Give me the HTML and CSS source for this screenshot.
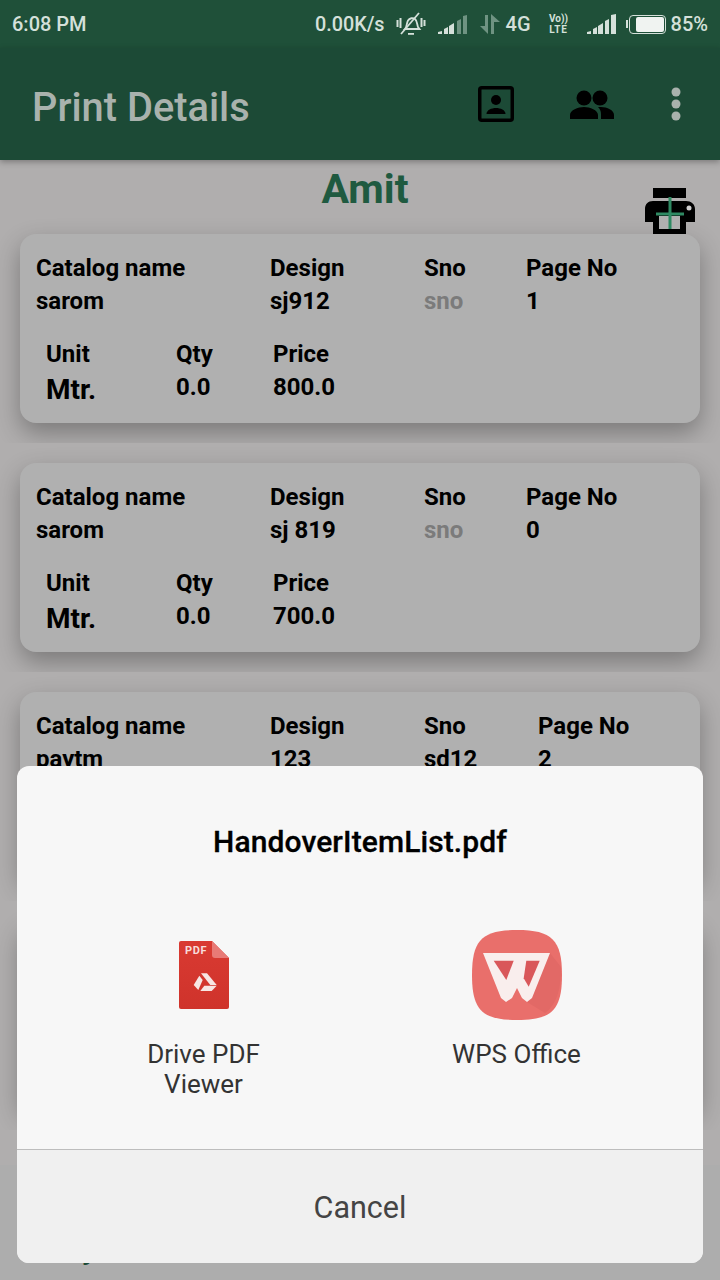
FILE: index.html
```html
<!DOCTYPE html>
<html lang="en">
<head>
<meta charset="utf-8">
<title>Print Details</title>
<link rel="stylesheet" href="styles.css">
</head>
<body>
<div class="phone">
  <header class="status">
    <span class="time">6:08 PM</span>
    <span class="status-right">
      <span class="speed">0.00K/s</span>
      <svg class="ic-bell" width="30" height="26" viewBox="0 0 30 26"><path d="M9 18c2-2 1.500-6 3-8.500 1.500-2.500 5-3 7-1.500 2.500 1.800 2 6 3 8l1.500 2H9z" fill="none" stroke="#d5e0da" stroke-width="1.800"/><path d="M12 22h6v1.800h-6z" fill="#d5e0da"/><path d="M5 23 23 2" stroke="#d5e0da" stroke-width="1.800"/><path d="M1.500 9v7M4.500 7v10M25.500 7v9M28.500 9v6" stroke="#d5e0da" stroke-width="2"/></svg>
      <svg class="ic-sig" width="30" height="20" viewBox="0 0 30 20"><path d="M1 20h4v-3l-4 1zM7 20h4v-7l-4 2zM12 20h5V9l-5 3z" fill="#d5e0da"/><path d="M20 20h4V5l-4 2zM26 20h4V1l-4 1z" fill="#6f9382"/></svg>
      <svg class="ic-arrows" width="22" height="20" viewBox="0 0 22 20"><path d="M6 1h3v19L1 12h5z" fill="#6f9382"/><path d="M12 20V0l9 8h-6v12z" fill="#6f9382"/></svg>
      <span class="net">4G</span>
      <span class="volte"><span>Vo))</span><span class="lte">LTE</span></span>
      <svg class="ic-sig2" width="30" height="20" viewBox="0 0 30 20"><path d="M1 20h4v-3l-4 1zM7 20h4v-7l-4 2zM12 20h5V9l-5 3zM19 20h4V5l-4 2zM25 20h5V0l-5 1z" fill="#d5e0da"/></svg>
      <span class="battery"><span class="battery-fill"></span></span>
      <span class="pct">85%</span>
    </span>
  </header>

  <div class="appbar">
    <h1 class="appbar-title">Print Details</h1>
    <svg class="ic-contact" width="38" height="38" viewBox="0 0 38 38"><rect x="3.750" y="2.750" width="32.500" height="32.500" rx="2" fill="none" stroke="#000" stroke-width="3.500"/><circle cx="20" cy="15" r="5"/><path d="M10.500 29c0-4 5-6 9.500-6s9.500 2 9.500 6z"/></svg>
    <svg class="ic-people" width="46" height="32" viewBox="0 0 46 32"><circle cx="15" cy="10" r="7.500"/><circle cx="31" cy="10" r="7.500"/><path d="M1 31v-4c0-5 8-8 14-8s14 3 14 8v4zM32 19c6 0 13 3 13 8v4H32v-5c0-3-1-5-3-7z"/></svg>
    <svg class="ic-more" width="12" height="34" viewBox="0 0 12 34"><circle cx="6" cy="5" r="4.500"/><circle cx="6" cy="17" r="4.500"/><circle cx="6" cy="29" r="4.500"/></svg>
  </div>

  <main class="content">
    <div class="name-row">
      <h2 class="name">Amit</h2>
      <svg class="ic-print" width="52" height="48" viewBox="0 0 52 48"><rect x="9" y="1" width="33" height="10"/><path d="M1 35V22c0-5 3-8 8-8h33c5 0 9 3 9 8v13h-9v-9H9v9z"/><path d="M9 24h33v23H9z"/><rect x="15" y="29" width="21" height="13" fill="#b0b0b0"/><circle cx="45" cy="21" r="2.500" fill="#d0d0d0"/><path d="M26 10v32M12 27h28" stroke="#2f8a63" stroke-width="3" fill="none"/></svg>
    </div>

    <div class="item">
      <section class="card">
        <div class="row-top">
          <div class="c1"><p>Catalog name</p><p>sarom</p></div>
          <div class="c2"><p>Design</p><p>sj912</p></div>
          <div class="c3"><p>Sno</p><p class="muted">sno</p></div>
          <div class="c4"><p>Page No</p><p>1</p></div>
        </div>
        <div class="row-bottom">
          <div class="d1"><p>Unit</p><p class="big">Mtr.</p></div>
          <div class="d2"><p>Qty</p><p>0.0</p></div>
          <div class="d3"><p>Price</p><p>800.0</p></div>
        </div>
      </section>
    </div>

    <div class="item">
      <section class="card">
        <div class="row-top">
          <div class="c1"><p>Catalog name</p><p>sarom</p></div>
          <div class="c2"><p>Design</p><p>sj 819</p></div>
          <div class="c3"><p>Sno</p><p class="muted">sno</p></div>
          <div class="c4"><p>Page No</p><p>0</p></div>
        </div>
        <div class="row-bottom">
          <div class="d1"><p>Unit</p><p class="big">Mtr.</p></div>
          <div class="d2"><p>Qty</p><p>0.0</p></div>
          <div class="d3"><p>Price</p><p>700.0</p></div>
        </div>
      </section>
    </div>

    <div class="item">
      <section class="card">
        <div class="row-top">
          <div class="c1"><p>Catalog name</p><p>paytm</p></div>
          <div class="c2"><p>Design</p><p>123</p></div>
          <div class="c3"><p>Sno</p><p>sd12</p></div>
          <div class="c4 wide"><p>Page No</p><p>2</p></div>
        </div>
      </section>
    </div>

    <div class="item">
      <section class="card"></section>
    </div>
  </main>

  <footer class="footer">Qty</footer>

  <div class="dialog">
    <h3 class="dialog-title">HandoverItemList.pdf</h3>
    <div class="apps">
      <div class="app">
        <div class="app-icon">
          <svg width="52" height="70" viewBox="0 0 52 70"><defs><linearGradient id="pdfred" x1="0" y1="0" x2="0" y2="1"><stop offset="0" stop-color="#d93a32"/><stop offset="1" stop-color="#cf332b"/></linearGradient></defs><path d="M3 1h31l17 17v49a2 2 0 0 1-2 2H3a2 2 0 0 1-2-2V3a2 2 0 0 1 2-2z" fill="url(#pdfred)"/><path d="M34 1l17 17H37a3 3 0 0 1-3-3z" fill="#e87a76"/><text x="7" y="14" class="pdf-label">PDF</text><path d="M23 33.300h6L38.700 45h-6.400z" fill="#f7e6e4"/><path d="M21.300 35.700 24.700 40l-4.400 10-4.600-5z" fill="#f7e6e4"/><path d="M26.300 45.700h12.400L33.700 51H22.300z" fill="#f7e6e4"/></svg>
        </div>
        <p class="app-name">Drive PDF<br>Viewer</p>
      </div>
      <div class="app">
        <div class="app-icon">
          <svg width="90" height="90" viewBox="0 0 90 90"><path d="M45 0C80 0 90 10 90 45S80 90 45 90 0 80 0 45 10 0 45 0z" fill="#e96f6b"/><path d="M78 23 89 37c0 24-5 38-16 46L55 72z" fill="#e26966"/><path d="M11 23h67L60 68l-5 4-5-4-5-10-5 10-6 4-5-4z" fill="#f9eeed"/><path d="M21.700 30.700h20L34.300 50z" fill="#d9575a"/><path d="M54.300 30.700h13.400L56.700 56.700l-5-8.400z" fill="#d9575a"/></svg>
        </div>
        <p class="app-name">WPS Office</p>
      </div>
    </div>
    <button class="cancel">Cancel</button>
  </div>
</div>
</body>
</html>
```
FILE: styles.css
```css
* { box-sizing: border-box; }
html, body { margin: 0; padding: 0; }
body { font-family: Roboto, "Noto Sans", sans-serif; }
p, h1, h2, h3 { margin: 0; }
.phone { position: relative; width: 720px; height: 1280px; overflow: hidden; background: #adadad; display: flex; flex-direction: column; }

.status { flex: none; height: 48px; background: #1f5039; display: flex; align-items: center; justify-content: space-between; padding: 0 12px; color: #d5e0da; font-size: 20px; font-weight: 500; }
.status-right { display: flex; align-items: center; }
.speed { margin-right: 11px; font-size: 19.800px; }
.ic-bell { margin-right: 11px; }
.ic-sig { margin-right: 12px; }
.ic-arrows { margin-right: 5px; }
.net { margin-right: 16px; }
.volte { width: 24px; display: flex; flex-direction: column; font-size: 10px; font-weight: 700; line-height: 11px; margin-right: 15px; align-items: center; }
.lte { letter-spacing: .8px; }
.ic-sig2 { margin-right: 13px; }
.battery { position: relative; width: 37px; height: 19px; border: 1.500px solid #d5e0da; border-radius: 4px; margin-right: 5px; padding: 1px 1px 1px 6px; display: flex; }
.battery::before { content: ""; position: absolute; left: -4px; top: 4px; width: 2px; height: 8px; background: #d5e0da; }
.battery-fill { flex: 1; background: #f0f3f1; border-radius: 2px; }

.appbar { flex: none; height: 112px; background: #1c4a36; display: flex; align-items: center; padding: 0 38px 0 32px; box-shadow: 0 2px 6px rgba(0,0,0,.3); position: relative; z-index: 2; }
.appbar-title { flex: 1; font-size: 39.800px; font-weight: 500; color: #a9b2ad; margin-top: 6px; }
.ic-contact { margin-right: 55px; }
.ic-people { margin-right: 55px; }
.ic-more { fill: #a9b2ad; }

.content { flex: 1; min-height: 0; background: #b0aeae; }
.name-row { position: relative; z-index: 1; height: 54px; text-align: center; }
.name { font-size: 41px; font-weight: 700; color: #1f5a40; padding: 8px 0 0 10px; line-height: 43px; }
.ic-print { position: absolute; right: 24px; top: 27px; }

.item { height: 229px; padding: 20px; overflow: hidden; }
.card { height: 189px; background: #b0b0b0; border-radius: 16px; padding: 18px 16px 0; box-shadow: 0 10px 24px rgba(0,0,0,.3); font-size: 24px; font-weight: 700; color: #000; line-height: 33px; }
.row-top { display: flex; }
.c1 { width: 234px; }
.c2 { width: 154px; }
.c3 { width: 102px; }
.c4.wide { margin-left: 12px; }
.row-bottom { display: flex; margin-top: 20px; padding-left: 10px; }
.d1 { width: 130px; }
.d2 { width: 97px; }
.big { font-size: 28px; line-height: 38px; }
.muted { color: #7b7b7b; }

.footer { flex: none; height: 115px; background: #adadad; padding: 66px 0 0 51px; font-size: 30px; font-weight: 700; line-height: 36px; color: #1c4a36; }

.dialog { position: absolute; left: 17px; top: 766px; width: 686px; height: 497px; background: #f7f7f7; border-radius: 12px; overflow: hidden; display: flex; flex-direction: column; }
.dialog-title { height: 152px; padding-top: 58px; text-align: center; font-size: 30px; font-weight: 500; line-height: 36px; color: #000; -webkit-text-stroke: .3px #000; letter-spacing: .1px; }
.apps { flex: 1; display: flex; padding: 12px 0 0 0; }
.app { width: 343px; text-align: center; }
.app:first-child { margin-left: 15px; }
.app:last-child { margin-left: -30px; }
.app-icon { height: 90px; display: flex; align-items: center; justify-content: center; }
.app-name { font-size: 26px; line-height: 30px; color: #333; margin-top: 19px; }
.pdf-label { font-family: Roboto, sans-serif; font-size: 11px; font-weight: 700; letter-spacing: .6px; fill: #f7dcdb; }
.cancel { flex: none; height: 114px; border: 0; border-top: 1px solid #bdbdbd; background: #f0f0f0; font-family: inherit; font-size: 30.500px; color: #444; padding: 2px 0 0; }
```
